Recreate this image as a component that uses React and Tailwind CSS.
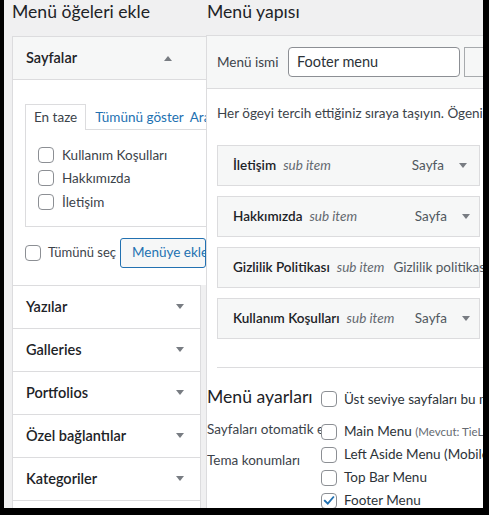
import React from "react";

const Check = ({ checked }) => (
  <span className="w-4 h-4 shrink-0 rounded-[4px] border border-[#8c8f94] bg-white flex items-center justify-center">
    {checked && (
      <svg viewBox="0 0 16 16" className="w-[15px] h-[15px]">
        <path d="M3.2 8.2 L6.6 11.6 L12.9 4.2" stroke="#2271b1" strokeWidth="2.1" fill="none" strokeLinecap="square" />
      </svg>
    )}
  </span>
);

const Down = () => (
  <svg width="8" height="5" viewBox="0 0 8 5" className="shrink-0">
    <path d="M0 0H8L4 5Z" fill="#787c82" />
  </svg>
);

const Up = () => (
  <svg width="8" height="5" viewBox="0 0 8 5" className="shrink-0">
    <path d="M0 5H8L4 0Z" fill="#787c82" />
  </svg>
);

const sections = ["Yazılar", "Galleries", "Portfolios", "Özel bağlantılar", "Kategoriler", ""];

const items = [
  { title: "İletişim", type: "Sayfa", pr: "pr-[12px]" },
  { title: "Hakkımızda", type: "Sayfa", pr: "pr-[9px]" },
  { title: "Gizlilik Politikası", long: "Gizlilik politikası sayfası" },
  { title: "Kullanım Koşulları", type: "Sayfa", pr: "pr-[9px]" },
];

export default function App() {
  return (
    <div className="w-[489px] h-[515px] bg-black overflow-hidden pl-[4px] pr-[6px] pb-[7px] font-['Lato',sans-serif] text-[13.5px] text-[#3c434a]">
      <div className="h-full bg-[#f0f0f1] overflow-hidden flex pl-[8px]">
        {/* Left column */}
        <div className="w-[194px] shrink-0 overflow-hidden">
          <h2 className="h-[36px] text-[17.6px] leading-[23px] text-[#1d2327] whitespace-nowrap">Menü öğeleri ekle</h2>
          <div className="border-l border-t border-[#dcdcde] bg-white">
            <div className="h-[43px] bg-[#f6f7f7] border-b border-[#dcdcde] flex items-center justify-between pl-[13px] pr-[34px]">
              <span className="text-[14.5px] font-semibold text-[#1d2327]">Sayfalar</span>
              <Up />
            </div>
            <div className="pt-[24px] pl-[12px] pb-[17px]">
              <div className="flex items-end relative z-10 -mb-px whitespace-nowrap">
                <div className="h-[26px] px-[8px] border border-b-0 border-[#dcdcde] bg-white flex items-center text-[#3c434a]">En taze</div>
                <span className="ml-[9px] h-[26px] flex items-center text-[#2271b1]">Tümünü göster</span>
                <span className="ml-[6px] h-[26px] flex items-center text-[#2271b1]">Ara</span>
              </div>
              <div className="w-[230px] border border-[#dcdcde] bg-white pt-[13px] pb-[12px] pl-[12px]">
                {["Kullanım Koşulları", "Hakkımızda", "İletişim"].map((t) => (
                  <div key={t} className="h-[23.5px] flex items-center gap-[8px] text-[#3c434a]">
                    <Check />
                    <span>{t}</span>
                  </div>
                ))}
              </div>
              <div className="mt-[11px] flex items-center h-[30px] whitespace-nowrap">
                <div className="w-[95px] shrink-0 flex items-center gap-[7px]">
                  <Check />
                  <span className="text-[13px]">Tümünü seç</span>
                </div>
                <div className="w-[86px] shrink-0 h-[30px] border border-[#2271b1] rounded-[3px] bg-[#f6f7f7] text-[#2271b1] flex items-center pl-[11px] overflow-hidden">
                  Menüye ekle
                </div>
              </div>
            </div>
          </div>
          <div className="w-[189px] border-l border-r border-[#dcdcde] bg-white">
            {sections.map((s, i) => (
              <div key={i} className="h-[43px] border-t border-[#dcdcde] flex items-center justify-between pl-[13px] pr-[16px]">
                <span className="text-[14.5px] font-semibold text-[#1d2327] whitespace-nowrap">{s}</span>
                {s && <Down />}
              </div>
            ))}
          </div>
        </div>

        {/* Right column */}
        <div className="flex-1 min-w-0">
          <h2 className="h-[35px] pl-[1px] text-[17.6px] leading-[23px] text-[#1d2327] whitespace-nowrap">Menü yapısı</h2>
          <div className="w-[320px] border-l border-t border-[#dcdcde] bg-white h-[480px]">
            <div className="h-[53px] bg-[#f6f7f7] border-b border-[#dcdcde] flex items-center pl-[10px]">
              <span className="w-[71px] shrink-0">Menü ismi</span>
              <div className="w-[172px] shrink-0 h-[30px] border border-[#8c8f94] rounded-[4px] bg-white flex items-center pl-[8px] text-[14.5px] text-[#2c3338]">
                Footer menu
              </div>
              <div className="ml-[4px] w-[60px] shrink-0 h-[30px] border-l border-t border-b border-[#a7aaad] bg-[#f6f7f7]" />
            </div>
            <p className="pt-[14px] pl-[10px] leading-[20px] whitespace-nowrap text-[#3c434a]">
              Her ögeyi tercih ettiğiniz sıraya taşıyın. Ögenin ek ayarlarını görmek için sağdaki oka tıklayın.
            </p>
            <div className="mt-[22px] ml-[10px] flex flex-col gap-[10px]">
              {items.map((it) => (
                <div key={it.title} className={`w-[263px] h-[41px] border border-[#dcdcde] bg-[#f6f7f7] flex items-center pl-[15px] whitespace-nowrap ${it.pr || ""}`}>
                  <span className="font-semibold text-[#1d2327]">{it.title}</span>
                  <span className="ml-[7px] italic text-[#646970]">sub item</span>
                  {it.long ? (
                    <span className="ml-[9px] text-[#50575e]">{it.long}</span>
                  ) : (
                    <>
                      <span className="flex-1" />
                      <span className="text-[#50575e]">{it.type}</span>
                      <span className="ml-[15px]"><Down /></span>
                    </>
                  )}
                </div>
              ))}
            </div>
            <div className="mt-[28px] ml-[10px] border-t border-[#dcdcde]" />
            <div className="flex">
              <div className="w-[114px] shrink-0 overflow-hidden whitespace-nowrap">
                <div className="mt-[18px] text-[17.6px] leading-[22px] text-[#1d2327]">Menü ayarları</div>
                <div className="mt-[11px] leading-[20px]">Sayfaları otomatik ekle</div>
                <div className="mt-[11px] leading-[20px]">Tema konumları</div>
              </div>
              <div className="whitespace-nowrap text-[#2c3338]">
                <div className="mt-[20px] h-[22px] flex items-center gap-[7px]">
                  <Check />
                  <span>Üst seviye sayfaları bu menüye otomatik olarak ekle</span>
                </div>
                <div className="mt-[10px] h-[23px] flex items-center gap-[7px]">
                  <Check />
                  <span>Main Menu <span className="text-[11.5px] text-[#646970]">(Mevcut: TieLabs Menu)</span></span>
                </div>
                <div className="h-[23px] flex items-center gap-[7px]">
                  <Check />
                  <span>Left Aside Menu (Mobile)</span>
                </div>
                <div className="h-[23px] flex items-center gap-[7px]">
                  <Check />
                  <span>Top Bar Menu</span>
                </div>
                <div className="h-[23px] flex items-center gap-[7px]">
                  <Check checked />
                  <span>Footer Menu</span>
                </div>
              </div>
            </div>
          </div>
        </div>
      </div>
    </div>
  );
}
